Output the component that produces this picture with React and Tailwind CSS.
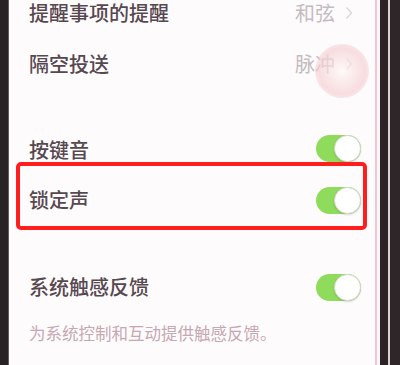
import React from "react";

function Toggle() {
  return (
    <div className="relative w-[45px] h-[27px] rounded-full bg-[#8fdc5c]">
      <div className="absolute right-0 top-0 w-[27px] h-[27px] rounded-full bg-white border border-[#d8d8d0] shadow-[0_1px_2px_rgba(0,0,0,0.15)]" />
    </div>
  );
}

function Chevron() {
  return (
    <svg width="8" height="14" viewBox="0 0 8 14" className="ml-[10px]">
      <path d="M1.5 1.5 L6.5 7 L1.5 12.5" fill="none" stroke="#dcd6d8" strokeWidth="1.4" />
    </svg>
  );
}

export default function App() {
  return (
    <div
      className="w-[400px] h-[365px] flex bg-[#231d20] overflow-hidden"
      style={{ fontFamily: '"Noto Sans CJK SC", "Noto Sans", sans-serif' }}
    >
      <div className="w-[9px] bg-[#2a2326] border-r border-[#6b5c62]" />
      <div className="relative w-[368px] h-full bg-[#fdfbfc] border-r-[2px] border-[#f0c8d2] flex flex-col pl-[20px] pr-[14px] overflow-hidden">
        <div className="h-[26px] flex items-center justify-between">
          <span className="text-[20px] font-medium text-[#574850] leading-none">提醒事项的提醒</span>
          <div className="flex items-center mr-[8px]">
            <span className="text-[20px] text-[#c4bcc0] leading-none">和弦</span>
            <Chevron />
          </div>
        </div>
        <div className="h-[52px] mt-[12px] flex items-center justify-between">
          <span className="text-[20px] font-medium text-[#574850] leading-none">隔空投送</span>
          <div className="flex items-center mr-[8px]">
            <span className="text-[20px] text-[#c4bcc0] leading-none">脉冲</span>
            <Chevron />
          </div>
        </div>
        <div className="h-[52px] mt-[32px] flex items-center justify-between">
          <span className="text-[20px] font-medium text-[#574850] leading-none mt-[4px]">按键音</span>
          <Toggle />
        </div>
        <div className="h-[52px] flex items-center justify-between">
          <span className="text-[20px] font-medium text-[#574850] leading-none">锁定声</span>
          <Toggle />
        </div>
        <div className="h-[52px] mt-[35px] flex items-center justify-between">
          <span className="text-[20px] font-medium text-[#574850] leading-none">系统触感反馈</span>
          <Toggle />
        </div>
        <div className="mt-[12px] text-[16.5px] text-[#c6a8b2] leading-none">为系统控制和互动提供触感反馈。</div>

        <div className="absolute left-[306px] top-[44px] w-[54px] h-[54px] rounded-full bg-[radial-gradient(circle,rgba(255,248,244,0.6)_0%,rgba(245,208,212,0.7)_60%,rgba(245,208,212,0)_100%)] pointer-events-none" />
        <div className="absolute left-[7px] top-[162px] w-[351px] h-[68px] border-[4px] border-[#ff1e1e] rounded-[5px] pointer-events-none" />
      </div>
      <div className="w-[3px] bg-[#fbf7f8]" />
      <div className="w-[8px] bg-[#2b2326]" />
      <div className="w-[2px] bg-[#d9d2d4]" />
      <div className="flex-1 bg-[#2e2629]" />
    </div>
  );
}
